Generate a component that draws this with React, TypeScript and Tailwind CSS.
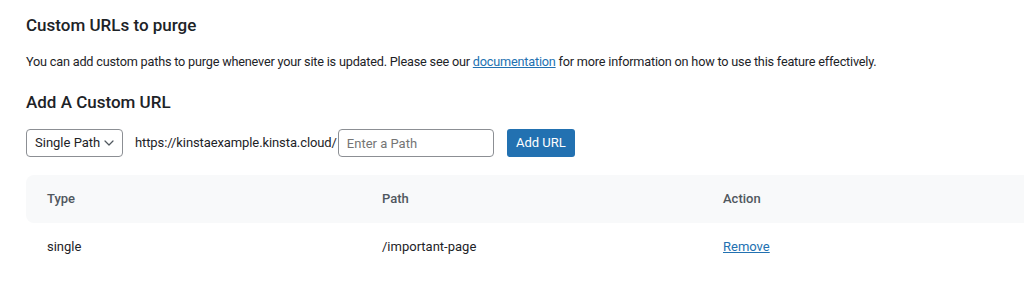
import { useState } from "react";

const App = () => {
  const [path, setPath] = useState("");

  return (
    <div
      className="h-[286px] w-[1024px] overflow-hidden bg-white text-[#1d2327]"
      style={{ fontFamily: "Roboto, 'Liberation Sans', sans-serif" }}
    >
      <div className="pl-[26px] pt-[13px]">
        <h2 className="text-[17px] font-medium leading-[24px]">
          Custom URLs to purge
        </h2>

        <p className="mt-[16px] text-[12.7px] leading-[18px] tracking-[-0.2px]">
          You can add custom paths to purge whenever your site is updated. Please see our{" "}
          <a href="#" className="text-[#2271b1] underline">
            documentation
          </a>{" "}
          for more information on how to use this feature effectively.
        </p>

        <h3 className="mt-[19px] text-[17px] font-medium leading-[24px]">
          Add A Custom URL
        </h3>

        {/* add url form */}
        <div className="mt-[15px] flex h-[28px] items-center whitespace-nowrap text-[13px]">
          <div className="flex h-[28px] w-[97px] shrink-0 items-center justify-between rounded-[4px] border border-[#8c8f94] pl-[8px] pr-[8px]">
            <span>Single Path</span>
            <svg width="10" height="6" viewBox="0 0 10 6" fill="none">
              <path d="M1 1l4 4 4-4" stroke="#50575e" strokeWidth="1.2" strokeLinecap="round" strokeLinejoin="round" />
            </svg>
          </div>
          <span className="ml-[12px] tracking-[-0.1px]">https://kinstaexample.kinsta.cloud/</span>
          <input
            value={path}
            onChange={(e) => setPath(e.target.value)}
            placeholder="Enter a Path"
            className="ml-[1px] h-[28px] w-[156px] shrink-0 rounded-[4px] border border-[#8c8f94] px-[8px] text-[13px] placeholder:text-[#757575] focus:outline-none"
          />
          <button className="ml-[13px] h-[28px] w-[68px] shrink-0 rounded-[3px] bg-[#2271b1] text-[13px] text-white">
            Add URL
          </button>
        </div>

        {/* urls table */}
        <div className="mt-[18px] w-[1030px] text-[13px]">
          <div className="grid h-[48px] grid-cols-[335px_341px_1fr] items-center rounded-l-[8px] bg-[#f8f9fa] font-medium text-[#50575e]">
            <p className="pl-[21px]">Type</p>
            <p className="pl-[21px]">Path</p>
            <p className="pl-[21px]">Action</p>
          </div>
          <div className="grid h-[48px] grid-cols-[335px_341px_1fr] items-center">
            <p className="pl-[21px]">single</p>
            <p className="pl-[21px]">/important-page</p>
            <p className="pl-[21px]">
              <a href="#" className="text-[#2271b1] underline">
                Remove
              </a>
            </p>
          </div>
        </div>
      </div>
    </div>
  );
};

export default App;
